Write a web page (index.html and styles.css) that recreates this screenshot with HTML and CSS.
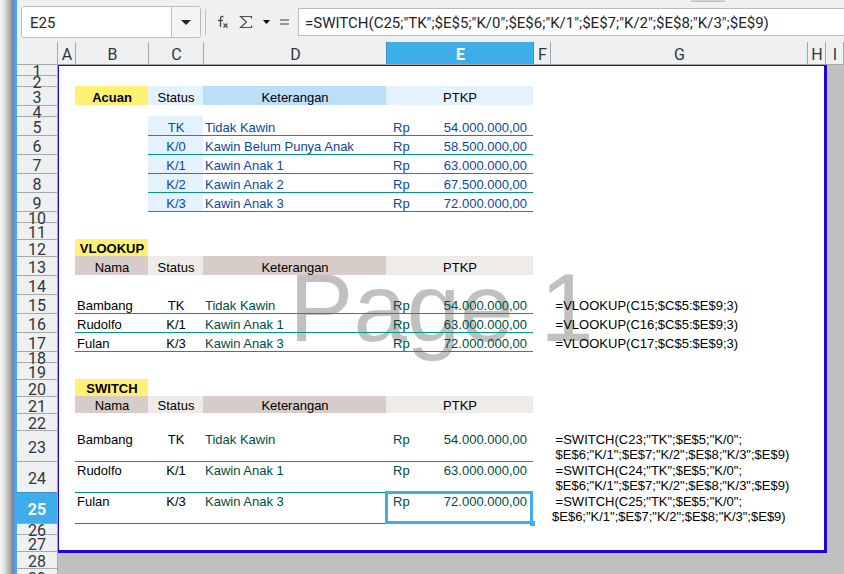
FILE: index.html
```html
<!DOCTYPE html>
<html lang="id">
<head>
<meta charset="utf-8">
<title>PTKP</title>
<link rel="stylesheet" href="styles.css">
</head>
<body>
<div class="edge"></div>
<main class="app">
  <div class="toolbar">
    <span class="grip"></span>
    <div class="namebox">
      <input type="text" value="E25" aria-label="Name Box">
      <button type="button" aria-label="Choose cell"><svg width="10" height="5" viewBox="0 0 10 5"><path d="M0 0h10L5 5z" fill="#232629"/></svg></button>
    </div>
    <div class="tools">
      <button type="button" aria-label="Function Wizard"><svg width="12" height="14" viewBox="0 0 12 14" fill="none" stroke="#4d4d4d"><path d="M6.500 1.500H5.500Q3.500 1.500 3.500 3.500V12M1 5.500h5" stroke-width="1.300"/><path d="M6.500 8.500l4 4M10.500 8.500l-4 4" stroke-width="1.400"/></svg></button>
      <button type="button" aria-label="Select Function"><svg width="14" height="14" viewBox="0 0 14 14" fill="none" stroke="#4d4d4d" stroke-width="1.200"><path d="M12.500 3.500V1.500H1.500L7.500 7L1.500 12.500H12.500V10.500"/></svg></button>
      <button type="button" aria-label="More functions"><svg width="7" height="4" viewBox="0 0 7 4"><path d="M0 0h7L3.500 4z" fill="#000"/></svg></button>
      <button type="button" aria-label="Formula"><svg width="9" height="6" viewBox="0 0 9 6"><path d="M0 1h9M0 5h9" stroke="#777" stroke-width="1.500"/></svg></button>
    </div>
    <input class="formula" type="text" aria-label="Input line" value='=SWITCH(C25;"TK";$E$5;"K/0";$E$6;"K/1";$E$7;"K/2";$E$8;"K/3";$E$9)'>
  </div>
  <div class="sheet">
    <div class="page"><span>Page 1</span></div>
    <table>
      <colgroup><col class="w-head"><col class="w-gap"><col class="w-b"><col class="w-c"><col class="w-d"><col class="w-e"><col class="w-f"><col><col class="w-gap"><col class="w-gap"><col class="w-end"></colgroup>
      <thead>
        <tr><td></td><th>A</th><th>B</th><th>C</th><th>D</th><th class="active">E</th><th class="after">F</th><th>G</th><th>H</th><th>I</th><th></th></tr>
      </thead>
      <tbody>
        <tr class="xs first"><th>1</th><td colspan="10"></td></tr>
        <tr class="xs"><th>2</th><td colspan="10"></td></tr>
        <tr class="md"><th>3</th><td></td><td class="title">Acuan</td><td class="sky mid">Status</td><td class="blue mid">Keterangan</td><td class="sky mid">PTKP</td><td colspan="5"></td></tr>
        <tr class="xs"><th>4</th><td colspan="10"></td></tr>
        <tr class="md ref"><th>5</th><td></td><td></td><td class="sky mid">TK</td><td>Tidak Kawin</td><td><div class="money"><span>Rp</span><span>54.000.000,00</span></div></td><td colspan="5"></td></tr>
        <tr class="md ref"><th>6</th><td></td><td></td><td class="sky mid line">K/0</td><td class="line">Kawin Belum Punya Anak</td><td class="line"><div class="money"><span>Rp</span><span>58.500.000,00</span></div></td><td colspan="5"></td></tr>
        <tr class="md ref"><th>7</th><td></td><td></td><td class="sky mid line">K/1</td><td class="line">Kawin Anak 1</td><td class="line"><div class="money"><span>Rp</span><span>63.000.000,00</span></div></td><td colspan="5"></td></tr>
        <tr class="md ref"><th>8</th><td></td><td></td><td class="sky mid line">K/2</td><td class="line">Kawin Anak 2</td><td class="line"><div class="money"><span>Rp</span><span>67.500.000,00</span></div></td><td colspan="5"></td></tr>
        <tr class="md ref"><th>9</th><td></td><td></td><td class="sky mid line">K/3</td><td class="line">Kawin Anak 3</td><td class="line"><div class="money"><span>Rp</span><span>72.000.000,00</span></div></td><td colspan="5"></td></tr>
        <tr class="xs"><th>10</th><td></td><td></td><td class="line" colspan="3"></td><td colspan="5"></td></tr>
        <tr class="sm"><th>11</th><td colspan="10"></td></tr>
        <tr class="sm"><th>12</th><td></td><td class="title">VLOOKUP</td><td colspan="8"></td></tr>
        <tr class="md"><th>13</th><td></td><td class="brown mid">Nama</td><td class="sand mid">Status</td><td class="brown mid">Keterangan</td><td class="sand mid">PTKP</td><td colspan="5"></td></tr>
        <tr class="md"><th>14</th><td colspan="10"></td></tr>
        <tr class="md"><th>15</th><td></td><td>Bambang</td><td class="mid">TK</td><td class="found">Tidak Kawin</td><td class="found"><div class="money"><span>Rp</span><span>54.000.000,00</span></div></td><td></td><td>&nbsp;=VLOOKUP(C15;$C$5:$E$9;3)</td><td colspan="3"></td></tr>
        <tr class="md"><th>16</th><td></td><td class="line">Rudolfo</td><td class="mid line">K/1</td><td class="found line">Kawin Anak 1</td><td class="found line"><div class="money"><span>Rp</span><span>63.000.000,00</span></div></td><td></td><td>&nbsp;=VLOOKUP(C16;$C$5:$E$9;3)</td><td colspan="3"></td></tr>
        <tr class="md"><th>17</th><td></td><td class="line">Fulan</td><td class="mid line">K/3</td><td class="found line">Kawin Anak 3</td><td class="found line"><div class="money"><span>Rp</span><span>72.000.000,00</span></div></td><td></td><td>&nbsp;=VLOOKUP(C17;$C$5:$E$9;3)</td><td colspan="3"></td></tr>
        <tr class="xs"><th>18</th><td></td><td class="line" colspan="4"></td><td colspan="5"></td></tr>
        <tr class="sm"><th>19</th><td colspan="10"></td></tr>
        <tr class="sm"><th>20</th><td></td><td class="title">SWITCH</td><td colspan="8"></td></tr>
        <tr class="sm"><th>21</th><td></td><td class="brown mid">Nama</td><td class="sand mid">Status</td><td class="brown mid">Keterangan</td><td class="sand mid">PTKP</td><td colspan="5"></td></tr>
        <tr class="sm"><th>22</th><td colspan="10"></td></tr>
        <tr class="lg"><th>23</th><td></td><td>Bambang</td><td class="mid">TK</td><td class="found">Tidak Kawin</td><td class="found"><div class="money"><span>Rp</span><span>54.000.000,00</span></div></td><td></td><td><div class="note">&nbsp;=SWITCH(C23;"TK";$E$5;"K/0";<br>&nbsp;$E$6;"K/1";$E$7;"K/2";$E$8;"K/3";$E$9)</div></td><td colspan="3"></td></tr>
        <tr class="lg"><th>24</th><td></td><td class="line">Rudolfo</td><td class="mid line">K/1</td><td class="found line">Kawin Anak 1</td><td class="found line"><div class="money"><span>Rp</span><span>63.000.000,00</span></div></td><td></td><td><div class="note">&nbsp;=SWITCH(C24;"TK";$E$5;"K/0";<br>&nbsp;$E$6;"K/1";$E$7;"K/2";$E$8;"K/3";$E$9)</div></td><td colspan="3"></td></tr>
        <tr class="lg"><th class="active">25</th><td></td><td class="line">Fulan</td><td class="mid line">K/3</td><td class="found line">Kawin Anak 3</td><td class="found line selected"><div class="money"><span>Rp</span><span>72.000.000,00</span></div></td><td></td><td><div class="note">&nbsp;=SWITCH(C25;"TK";$E$5;"K/0";<br>$E$6;"K/1";$E$7;"K/2";$E$8;"K/3";$E$9)</div></td><td colspan="3"></td></tr>
        <tr class="xs"><th>26</th><td></td><td class="line" colspan="4"></td><td colspan="5"></td></tr>
        <tr class="sm"><th>27</th><td colspan="10"></td></tr>
        <tr class="sm"><th>28</th><td colspan="10"></td></tr>
        <tr class="sm"><th>29</th><td colspan="10"></td></tr>
      </tbody>
    </table>
  </div>
</main>
</body>
</html>
```
FILE: styles.css
```css
* { box-sizing: border-box; }

body {
  margin: 0;
  height: 100vh;
  display: flex;
  overflow: hidden;
  background: #c0c0c0;
  font: 13px/15px "Liberation Sans", Arial, sans-serif;
  color: #000;
}

.edge {
  flex: none;
  width: 17px;
  border-right: 3px solid #4ba4fa;
  background: linear-gradient(to right, #f4f4f4 0, #e4e4e4 4px, #b4b4b4 9px, #7c7c7c 14px);
}

.app { flex: 1; min-width: 0; }

/* Formula bar */
.toolbar {
  position: relative;
  display: flex;
  align-items: center;
  height: 42px;
  padding: 4px 0 2px 4px;
  background: #eff0f1;
}

.grip {
  position: absolute;
  top: 0;
  left: 674px;
  width: 34px;
  height: 2px;
  background: #d4d5d6;
  border-bottom: 1px solid #bcbebf;
}

.toolbar input {
  min-width: 0;
  border: 0;
  background: #fff;
  color: #232629;
  font: 15px/20px Roboto, sans-serif;
}

.namebox {
  flex: none;
  display: flex;
  width: 180px;
  height: 32px;
  border: 1px solid #b9bbbd;
  border-radius: 3px;
  overflow: hidden;
}

.namebox input { flex: 1; padding: 2px 8px 0; }

.namebox button {
  width: 29px;
  padding: 0;
  border: 0;
  border-left: 1px solid #b9bbbd;
  background: #f3f4f4;
}

button svg { display: block; margin: auto; }

.tools {
  flex: none;
  display: flex;
  align-items: center;
  gap: 10px;
  height: 26px;
  margin-left: 4px;
  padding: 0 9px 0 11px;
  border-left: 1px solid #bfc1c2;
}

.tools button { padding: 0; border: 0; background: none; }

.toolbar .formula {
  flex: 1;
  height: 28px;
  padding: 2px 6px 0;
  border: 1px solid #b9bbbd;
  border-right: 0;
}

/* Spreadsheet grid */
.sheet { position: relative; }

.page {
  position: absolute;
  top: 23px;
  left: 41px;
  right: 17px;
  height: 488px;
  display: flex;
  align-items: center;
  justify-content: center;
  background: #fff;
  border: 1px solid #2300dc;
  border-width: 1px 3px 3px 1px;
  color: #c0c0c0;
  font-size: 96px;
  line-height: 110px;
}

table {
  position: relative;
  width: 100%;
  table-layout: fixed;
  border-collapse: separate;
  border-spacing: 0;
}

.w-head { width: 40px; }
.w-gap { width: 18px; }
.w-b { width: 73px; }
.w-c { width: 55px; }
.w-d { width: 183px; }
.w-e { width: 147px; }
.w-f { width: 17px; }
.w-end { width: 1px; }

th {
  padding: 0;
  background: #eff0f1;
  color: #31363b;
  font: 16px/6px Roboto, sans-serif;
}

thead td { background: #eff0f1; }

thead th {
  height: 22px;
  padding-top: 3px;
  padding-left: 1px;
  border-left: 1px solid #a5a7a8;
}

thead th:last-child { padding-left: 0; }

thead .after { border-left-color: #3592c4; }

tbody th {
  padding-top: 4px;
  border-top: 1px solid #a5a7a8;
}

tbody th + td { border-left: 1px solid #a5a7a8; }
.first td { border-top: 1px solid #a5a7a8; }

th.active {
  background: #3daee9;
  border-color: #3592c4;
  color: #fff;
  font-weight: 700;
}

td {
  padding: 0 2px;
  vertical-align: bottom;
  white-space: nowrap;
}

.xs { height: 11px; }
.sm { height: 17px; }
.md { height: 19px; }
.lg { height: 31px; }

.lg td { padding-top: 2px; vertical-align: top; }
.lg td.line { padding-top: 1px; }
.note { height: 29px; }

.line { border-top: 1px solid #009688; }
.ref { color: #0d47a1; }
.found { color: #004d40; }

.mid, .title { padding: 0 1px 0 2px; text-align: center; }
.title { background: #fff176; font-weight: 700; }
.sky { background: #e3f2fd; }
.blue { background: #bbdefb; }
.brown { background: #d7ccc8; }
.sand { background: #efebe9; }

.money {
  display: flex;
  justify-content: space-between;
  padding: 0 4px 0 5px;
}

.selected { position: relative; }

.selected::before {
  content: "";
  position: absolute;
  inset: -2px 0 -1px -1px;
  border: 3px solid #3daee9;
}

.selected::after {
  content: "";
  position: absolute;
  right: -2px;
  bottom: -3px;
  width: 5px;
  height: 5px;
  background: #3daee9;
}
```
